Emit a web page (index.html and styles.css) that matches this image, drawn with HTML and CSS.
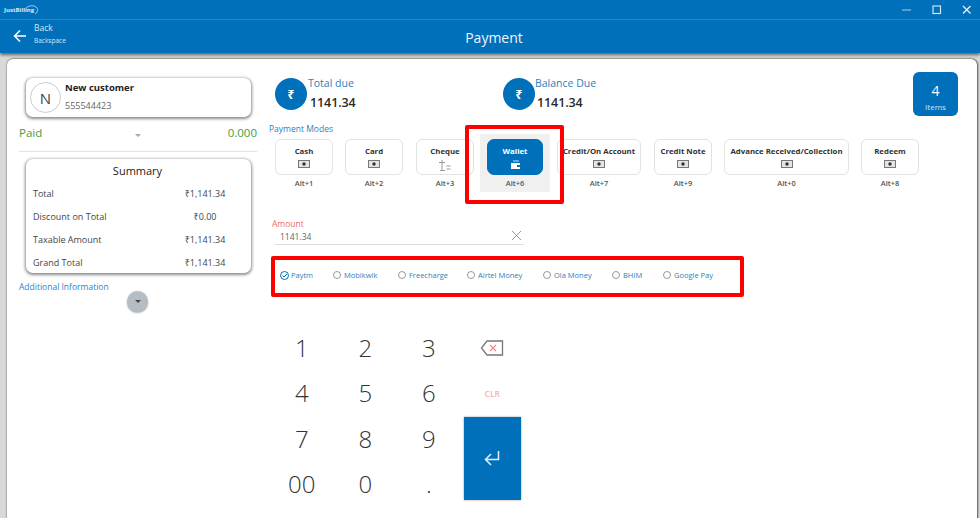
FILE: index.html
```html
<!DOCTYPE html>
<html>
<head>
<meta charset="utf-8">
<link rel="stylesheet" href="styles.css">
</head>
<body>
<header class="header">
  <div class="titlebar">
    <span class="logo">JustBilling<svg class="swoosh" width="14" height="10" viewBox="0 0 14 10"><path d="M1 3C4 0 10 0 12 3c1.500 2 0 5-2 6" fill="none" stroke="#cfe3f2" stroke-width=".8"/></svg></span>
    <div class="winctl">
      <svg width="12" height="12" viewBox="0 0 12 12"><path d="M1 6h9" stroke="#a9cde8" stroke-width="1"/></svg>
      <svg width="12" height="12" viewBox="0 0 12 12"><rect x="2" y="2" width="7.500" height="7.500" fill="none" stroke="#cfe3f2" stroke-width="1.200"/></svg>
      <svg width="12" height="12" viewBox="0 0 12 12"><path d="M2 2l7.500 7.500M9.500 2L2 9.500" stroke="#e6f0f8" stroke-width="1.300"/></svg>
    </div>
  </div>
  <div class="navbar">
    <svg class="back-arrow" width="14" height="14" viewBox="0 0 14 14"><path d="M13 7H2M7 1.500L1.500 7 7 12.500" fill="none" stroke="#fff" stroke-width="1.500"/></svg>
    <div class="back-text"><span class="back-label">Back</span><span class="back-key">Backspace</span></div>
    <h1 class="page-title">Payment</h1>
  </div>
</header>
<main class="card">
  <aside class="left">
    <div class="panel customer">
      <div class="avatar">N</div>
      <div class="cust-text"><b>New customer</b><span>555544423</span></div>
    </div>
    <div class="paid-row"><span>Paid</span><i class="tri"></i><span>0.000</span></div>
    <div class="rule"></div>
    <div class="panel summary">
      <div class="sum-title">Summary</div>
      <div class="sum-row"><span>Total</span><span class="val">₹1,141.34</span></div>
      <div class="sum-row"><span>Discount on Total</span><span class="val">₹0.00</span></div>
      <div class="sum-row"><span>Taxable Amount</span><span class="val">₹1,141.34</span></div>
      <div class="sum-row"><span>Grand Total</span><span class="val">₹1,141.34</span></div>
    </div>
    <div class="addl">Additional Information</div>
    <div class="expand"><i class="tri dark"></i></div>
  </aside>
  <section class="right">
    <div class="totals">
      <div class="due first">
        <div class="rupee">₹</div>
        <div class="due-text"><span>Total due</span><b>1141.34</b></div>
      </div>
      <div class="due">
        <div class="rupee">₹</div>
        <div class="due-text"><span>Balance Due</span><b>1141.34</b></div>
      </div>
      <div class="items"><span class="items-n">4</span><span class="items-l">Items</span></div>
    </div>
    <div class="modes-label">Payment Modes</div>
    <div class="modes">
      <div class="mode w1"><div class="mode-btn"><b>Cash</b><svg class="ic" width="12" height="8" viewBox="0 0 12 8"><rect x=".5" y=".5" width="11" height="7" fill="#e4e4e4" stroke="#777"/><circle cx="6" cy="4" r="1.700" fill="#333"/></svg></div><span>Alt+1</span></div>
      <div class="mode w1"><div class="mode-btn"><b>Card</b><svg class="ic" width="12" height="8" viewBox="0 0 12 8"><rect x=".5" y=".5" width="11" height="7" fill="#e4e4e4" stroke="#777"/><circle cx="6" cy="4" r="1.700" fill="#333"/></svg></div><span>Alt+2</span></div>
      <div class="mode cheque"><div class="mode-btn"><b>Cheque</b><svg class="ic" width="12" height="11" viewBox="0 0 12 11"><path d="M0 2.500h6M3 0v10M1 10.500h5M7.500 6h4M7.500 9h4" fill="none" stroke="#999"/></svg></div><span>Alt+3</span></div>
      <div class="mode active"><div class="mode-btn"><b>Wallet</b><svg class="ic" width="11" height="10" viewBox="0 0 11 10"><path d="M3 1h6" stroke="#cfe3f2"/><path d="M1 3h9v6H1z" fill="#fff"/><path d="M7 5h3v2H7z" fill="#0070bb"/></svg></div><span>Alt+6</span></div>
      <div class="mode w2"><div class="mode-btn"><b>Credit/On Account</b><svg class="ic" width="12" height="8" viewBox="0 0 12 8"><rect x=".5" y=".5" width="11" height="7" fill="#e4e4e4" stroke="#777"/><circle cx="6" cy="4" r="1.700" fill="#333"/></svg></div><span>Alt+7</span></div>
      <div class="mode w1"><div class="mode-btn"><b>Credit Note</b><svg class="ic" width="12" height="8" viewBox="0 0 12 8"><rect x=".5" y=".5" width="11" height="7" fill="#e4e4e4" stroke="#777"/><circle cx="6" cy="4" r="1.700" fill="#333"/></svg></div><span>Alt+9</span></div>
      <div class="mode w3"><div class="mode-btn"><b>Advance Received/Collection</b><svg class="ic" width="12" height="8" viewBox="0 0 12 8"><rect x=".5" y=".5" width="11" height="7" fill="#e4e4e4" stroke="#777"/><circle cx="6" cy="4" r="1.700" fill="#333"/></svg></div><span>Alt+0</span></div>
      <div class="mode w1"><div class="mode-btn"><b>Redeem</b><svg class="ic" width="12" height="8" viewBox="0 0 12 8"><rect x=".5" y=".5" width="11" height="7" fill="#e4e4e4" stroke="#777"/><circle cx="6" cy="4" r="1.700" fill="#333"/></svg></div><span>Alt+8</span></div>
    </div>
    <div class="amount">
      <div class="amount-label">Amount</div>
      <div class="amount-input"><span>1141.34</span>
        <svg width="11" height="11" viewBox="0 0 11 11"><path d="M1 1l9 9M10 1l-9 9" stroke="#999" stroke-width="1"/></svg>
      </div>
    </div>
    <div class="wallets">
      <label class="wallet w-a"><svg width="9" height="9" viewBox="0 0 9 9"><circle cx="4.500" cy="4.500" r="4" fill="none" stroke="#0070bb"/><path d="M2.500 4.500l1.500 1.500 3-3" fill="none" stroke="#0070bb"/></svg>Paytm</label>
      <label class="wallet w-b"><i class="radio"></i>Mobikwik</label>
      <label class="wallet w-c"><i class="radio"></i>Freecharge</label>
      <label class="wallet w-d"><i class="radio"></i>Airtel Money</label>
      <label class="wallet w-c"><i class="radio"></i>Ola Money</label>
      <label class="wallet w-f"><i class="radio"></i>BHIM</label>
      <label class="wallet"><i class="radio"></i>Google Pay</label>
    </div>
    <div class="keypad">
      <div class="key">1</div><div class="key">2</div><div class="key">3</div>
      <div class="key icon"><svg width="24" height="18" viewBox="0 0 24 18"><path d="M7 2h15.500v14H7L1.500 9z" fill="none" stroke="#777" stroke-width="1.300"/><path d="M10 6l6 6M16 6l-6 6" stroke="#f08a8a" stroke-width="1.200"/></svg></div>
      <div class="key">4</div><div class="key">5</div><div class="key">6</div>
      <div class="key clr">CLR</div>
      <div class="key">7</div><div class="key">8</div><div class="key">9</div>
      <div class="enter"><svg width="16" height="16" viewBox="0 0 16 16"><path d="M14.500 1v8.500H2M7 4L1.500 9.500 7 15" fill="none" stroke="#e4f0f8" stroke-width="1.500"/></svg></div>
      <div class="key">00</div><div class="key">0</div><div class="key dot">.</div>
    </div>
  </section>
  <div class="hl hl-wallet"></div>
  <div class="hl hl-list"></div>
</main>
</body>
</html>
```
FILE: styles.css
```css
* { box-sizing: border-box; }
html, body { margin: 0; height: 100%; overflow: hidden; }
body { width: 980px; height: 518px; background: #d9d9d9; font-family: "Open Sans", "Noto Sans", sans-serif; color: #333; }
.header { background: #0070bb; height: 53px; box-shadow: 0 2px 3px rgba(0,0,0,.55); position: relative; z-index: 2; }
.titlebar { height: 20px; display: flex; justify-content: space-between; align-items: center; padding: 1px 7px 0 4px; border-bottom: 1px solid #2c86c5; }
.logo { font-size: 6px; font-weight: 700; color: #dcebf6; display: flex; align-items: center; }
.swoosh { margin-left: -9px; }
.winctl { display: flex; gap: 18px; }
.navbar { height: 33px; display: flex; align-items: flex-start; position: relative; padding: 2px 0 0 13px; }
.back-arrow { margin: 7px 7px 0 0; }
.back-text { display: flex; flex-direction: column; color: #d5e6f3; margin-top: -1px; }
.back-label { font-size: 8.500px; line-height: 13px; }
.back-key { font-size: 6.500px; line-height: 13px; }
.page-title { position: absolute; left: 0; right: 0; top: 7px; margin: 0; text-align: center; font-size: 14px; font-weight: 400; line-height: 22px; color: #eef6fb; padding-left: 8px; }
.card { position: relative; margin: 6px 3px 0 7px; height: 470px; background: #fff; border-radius: 6px 6px 0 0; box-shadow: 0 0 2px rgba(0,0,0,.6), 1px 0 2px rgba(0,0,0,.5); display: flex; }
.left { width: 262px; padding: 19px 0 0 12px; display: flex; flex-direction: column; }
.panel { background: #fff; border-radius: 7px; box-shadow: 0 1px 3px 1px rgba(0,0,0,.45); }
.customer { margin-left: 7px; width: 225px; height: 39px; display: flex; align-items: center; padding-left: 4px; }
.avatar { width: 31px; height: 31px; border-radius: 50%; border: 1px solid #ccc; display: flex; align-items: center; justify-content: center; font-size: 15px; color: #444; margin-right: 4px; flex: none; }
.cust-text { display: flex; flex-direction: column; font-size: 9.500px; line-height: 17px; margin-top: -3px; }
.cust-text b { color: #222; font-weight: 700; }
.cust-text span { color: #666; font-size: 9px; margin-top: 1px; }
.paid-row { display: flex; justify-content: space-between; align-items: center; height: 22px; margin-top: 4px; color: #3f9a3f; font-size: 11.500px; width: 238px; position: relative; }
.tri { display: block; width: 0; height: 0; border: 3.500px solid transparent; border-top: 3.500px solid #aaa; border-bottom: 0; margin: 7px 0 0 6px; }
.rule { width: 238px; height: 1px; background: #e3e3e3; margin-top: 8px; }
.summary { margin: 7px 0 0 7px; width: 225px; height: 114px; padding: 4px 9px 0 7px; }
.sum-title { text-align: center; font-size: 11px; line-height: 15px; color: #222; margin-bottom: 4px; }
.sum-row { display: flex; justify-content: space-between; font-size: 9px; line-height: 23px; color: #444; }
.val { width: 74px; text-align: center; }
.addl { font-size: 8.500px; color: #2a86cc; margin-top: 7px; line-height: 13px; }
.expand { width: 21px; height: 21px; border-radius: 50%; background: #b4bcc4; box-shadow: 0 1px 2px rgba(0,0,0,.35); margin: -2px 0 0 108px; display: flex; align-items: center; justify-content: center; }
.tri.dark { border-top-color: #444; margin: 0; }
.right { flex: 1; position: relative; padding: 12px 0 0 0; }
.totals { display: flex; height: 41px; position: relative; margin-left: 6px; }
.due { display: flex; width: 228px; }
.rupee { width: 32px; height: 32px; border-radius: 50%; background: #0070bb; color: #fff; font-size: 12px; font-weight: 700; display: flex; align-items: center; justify-content: center; flex: none; margin-top: 7px; }
.due-text { display: flex; flex-direction: column; }
.first .due-text { margin-left: 1px; }
.due-text span { font-size: 10.500px; color: #2a7fc0; line-height: 14px; margin-top: 5px; }
.due-text b { font-size: 12.500px; letter-spacing: -.1px; line-height: 20px; color: #2a2a2a; font-weight: 600; margin: 3px 0 0 2px; }
.items { position: absolute; right: 19px; top: 1px; width: 45px; height: 44px; padding-top: 6px; background: #0070bb; border-radius: 6px; color: #fff; display: flex; flex-direction: column; align-items: center; justify-content: center; }
.items-n { font-size: 14px; line-height: 19px; }
.items-l { font-size: 8px; line-height: 14px; color: #cfe3f2; }
.modes-label { font-size: 8.500px; color: #2a7fc0; line-height: 12px; margin-top: 11px; }
.modes { display: flex; margin: 4px 0 0 6px; align-items: flex-start; }
.mode { display: flex; flex-direction: column; align-items: center; font-size: 7.500px; font-weight: 600; color: #555; margin-right: 12px; flex: none; }
.mode > span { line-height: 12px; margin-top: 2px; height: 14px; }
.mode-btn { height: 36px; border: 1px solid #e2e2e2; border-radius: 6px; width: 100%; display: flex; flex-direction: column; align-items: center; padding-top: 6px; }
.mode-btn b { font-size: 7.800px; line-height: 11px; color: #333; font-weight: 700; white-space: nowrap; }
.ic { margin-top: 3px; }
.w1 { width: 58px; }
.w2 { width: 84px; margin-right: 13px; }
.w3 { width: 125px; }
.cheque { width: 58px; margin: 0 6px 0 1px; }
.active { width: 70px; background: #f0f0f0; padding: 5px 7px 0; margin: -5px 7px 0 0; height: 58px; }
.active .mode-btn { background: #0070bb; border-color: #0070bb; border-radius: 7px; }
.active .mode-btn b { color: #fff; }
.amount { margin: 26px 0 0 3px; width: 252px; }
.amount-label { font-size: 8.500px; color: #ef6b5f; line-height: 12px; }
.amount-input { height: 15px; border-bottom: 1px solid #ddd; display: flex; justify-content: space-between; align-items: flex-start; font-size: 8.500px; line-height: 13px; color: #666; padding: 0 2px 0 5px; margin-left: 3px; }
.wallets { display: flex; align-items: center; margin: 14px 0 0 11px; height: 32px; font-size: 7.500px; color: #2a7fc0; }
.wallet { display: flex; align-items: center; gap: 3px; flex: none; }
.radio { width: 8px; height: 8px; border: 1px solid #999; border-radius: 50%; display: block; }
.w-a { width: 53px; gap: 2px; }
.w-b { width: 65px; }
.w-c { width: 69px; }
.w-d { width: 76px; }
.w-f { width: 51px; }
.keypad { display: grid; grid-template-columns: repeat(4, 63.500px); grid-auto-rows: 45.300px; margin: 34px 0 0 1px; width: 256px; justify-items: center; align-items: center; }
.key { font-size: 24px; font-weight: 300; color: #333; font-family: "Open Sans", sans-serif; line-height: 45px; text-align: center; }
.key.icon { display: flex; align-items: center; }
.clr { font-size: 8.500px; color: #f4b5b5; font-weight: 600; padding-top: 1px; }
.enter { grid-column: 4; grid-row: 3 / span 2; width: 57px; height: 83px; background: #0070bb; box-shadow: 0 0 2px rgba(0,0,0,.4); display: flex; align-items: center; justify-content: center; align-self: start; margin-top: 1px; }
.hl { position: absolute; border: 4px solid #f00; border-radius: 2px; pointer-events: none; }
.hl-wallet { left: 458px; top: 66px; width: 99px; height: 79px; }
.hl-list { left: 264px; top: 197px; width: 473px; height: 41px; }
```
